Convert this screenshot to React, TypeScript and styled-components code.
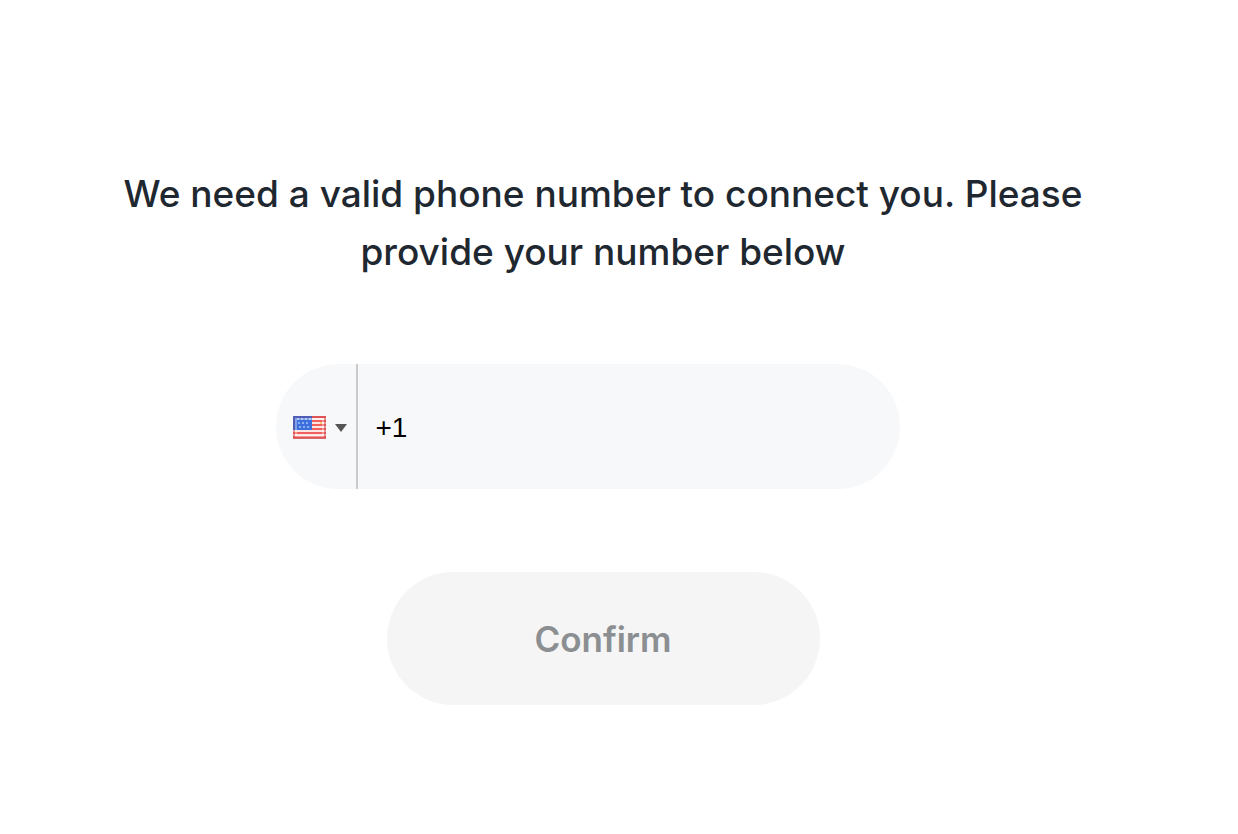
import React, { useState } from "react";
import styled, { createGlobalStyle } from "styled-components";

const GlobalStyle = createGlobalStyle`
  *, *::before, *::after { box-sizing: border-box; }
  body {
    margin: 0;
    background: #ffffff;
    font-family: Inter, "Liberation Sans", sans-serif;
  }
`;

const Form = styled.form`
  display: flex;
  flex-direction: column;
  align-items: center;
  padding: 165px 32px 64px 0;
`;

const Prompt = styled.label`
  width: 100%;
  max-width: 1000px;
  color: #1f2830;
  font-size: 37px;
  font-weight: 500;
  line-height: 58px;
  text-align: center;
`;

const PhoneField = styled.div`
  display: flex;
  width: 100%;
  max-width: 624px;
  height: 125px;
  margin: 83px 31px 83px 0;
  border-radius: 63px;
  background: #f7f8fa;
  overflow: hidden;
`;

const CountryButton = styled.button`
  display: flex;
  flex: none;
  align-items: center;
  gap: 9px;
  width: 82px;
  padding: 2px 0 0 17px;
  border: 0;
  border-right: 2px solid #cacaca;
  background: transparent;
  cursor: pointer;
`;

const PhoneInput = styled.input`
  flex: 1;
  min-width: 0;
  padding: 2px 32px 0 18px;
  border: 0;
  outline: 0;
  background: transparent;
  color: #000000;
  font-family: "Liberation Sans", Arial, sans-serif;
  font-size: 28px;
`;

const ConfirmButton = styled.button`
  width: 100%;
  max-width: 433px;
  height: 133px;
  padding: 0;
  border: 0;
  border-radius: 67px;
  background: #f5f5f5;
  color: #8b8f92;
  font-family: inherit;
  font-size: 35px;
  font-weight: 600;
`;

const stripes = [0, 1, 2, 3, 4, 5];
const starRows = [
  { y: 3, xs: [5, 9, 13, 17] },
  { y: 7, xs: [6, 10, 14] },
  { y: 11, xs: [7, 11, 15] },
];

function UsFlag() {
  return (
    <svg width="33" height="23" viewBox="0 0 33 23" aria-hidden="true">
      <rect width="33" height="23" fill="#fbe6e4" />
      {stripes.map((i) => (
        <rect key={i} y={i * 4} width="33" height="2" fill="#f0605e" />
      ))}
      <rect y="22" width="33" height="1" fill="#d98d8c" />
      <rect width="19" height="14" fill="#3a6fdc" />
      {starRows.map((row) =>
        row.xs.map((x) => <circle key={`${row.y}-${x}`} cx={x} cy={row.y} r="1" fill="#a9c4f8" />)
      )}
      <rect x="3" y="3" width="27" height="17" fill="none" stroke="#ffffff" strokeOpacity="0.35" strokeWidth="2" />
      <path d="M1 14V1H19" fill="none" stroke="#5a55a8" strokeOpacity="0.75" strokeWidth="2" />
      <path d="M19 1H32V22H1V14" fill="none" stroke="#d0484c" strokeOpacity="0.5" strokeWidth="2" />
      <circle cx="28" cy="7" r="1" fill="#ffc65c" />
    </svg>
  );
}

function Caret() {
  return (
    <svg width="12" height="8" viewBox="0 0 12 8" aria-hidden="true">
      <path d="M0 0H12L6 8Z" fill="#555555" />
    </svg>
  );
}

export default function App() {
  const [phone, setPhone] = useState("+1");
  return (
    <>
      <GlobalStyle />
      <Form onSubmit={(e) => e.preventDefault()}>
        <Prompt htmlFor="phone">
          We need a valid phone number to connect you. Please provide your number below
        </Prompt>
        <PhoneField>
          <CountryButton type="button" aria-label="Country: United States">
            <UsFlag />
            <Caret />
          </CountryButton>
          <PhoneInput id="phone" type="tel" value={phone} onChange={(e) => setPhone(e.target.value)} />
        </PhoneField>
        <ConfirmButton type="submit" disabled>
          Confirm
        </ConfirmButton>
      </Form>
    </>
  );
}
